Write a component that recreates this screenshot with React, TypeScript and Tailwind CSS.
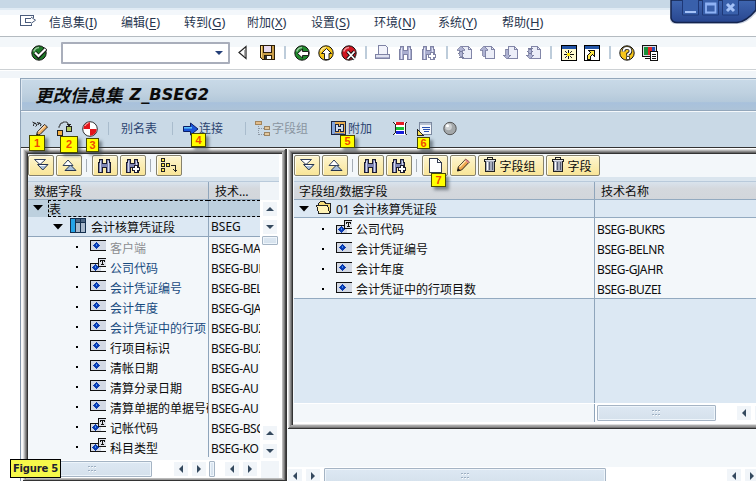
import React from "react";

type Kids = { children?: React.ReactNode };

const Svg = ({ w = 16, h = 16, c = "", crisp = true, children }: Kids & { w?: number; h?: number; c?: string; crisp?: boolean }) => (
  <svg width={w} height={h} viewBox={`0 0 ${w} ${h}`} className={"block flex-none " + c} shapeRendering={crisp ? "crispEdges" : "auto"}>
    {children}
  </svg>
);

const Sep = ({ c }: { c: string }) => <div className={"flex-none " + c} />;

/* ---------- icons ---------- */
const Ball = ({ fill, c, children }: Kids & { fill: string; c: string }) => (
  <Svg c={c} crisp={false}>
    <circle cx="8" cy="8" r="7.2" fill={fill} stroke="#111" strokeWidth="1" />
    <path d="M2.8 6.5Q4 2.8 8 2.5" stroke="#fff" strokeOpacity=".55" strokeWidth="1.6" fill="none" />
    {children}
  </Svg>
);

const Binoculars = ({ c = "", pale = false, plus = false }: { c?: string; pale?: boolean; plus?: boolean }) => {
  const s = pale ? "#7f83a5" : "#1b1b2e";
  const f = pale ? "#a9adcf" : "#7f86b4";
  const hi = pale ? "#e2e4f4" : "#d5d9ee";
  return (
    <Svg c={c}>
      <path d="M2.500 1.500h3v4h4v-4h3v3h1v10h-4v-5h-4v5h-4v-10h1z" fill={f} stroke={s} />
      <path d="M3 3h1v11h-1zM11 3h1v11h-1z" fill={hi} />
      {plus && <path d="M10.5 7.5h2v2h2v3h-2v2h-3v-2h-2v-3h2v-2z" fill="#fff" stroke={s} />}
    </Svg>
  );
};

const PageNav = ({ c, up, double }: { c: string; up: boolean; double?: boolean }) => (
  <Svg c={c}>
    <path d="M5.500 1.500h6l3 3v8.500h-9z" fill="#eceef8" stroke="#8286a8" />
    <path d="M11.500 1.500v3h3" fill="none" stroke="#8286a8" />
    {up ? (
      <path d="M4 1l4 4h-2.500v6h-3v-6H0z" fill="#aeb2d2" stroke="#777b9d" strokeWidth=".8" />
    ) : (
      <path d="M4 14l4-4h-2.500V4h-3v6H0z" fill="#aeb2d2" stroke="#777b9d" strokeWidth=".8" />
    )}
    {double && <path d={up ? "M1 9l3-3 3 3M2 12h5" : "M1 6l3 3 3-3M2 3h5"} stroke="#777b9d" fill="none" />}
  </Svg>
);

const DoubleDown = () => (
  <Svg crisp={false} c="-mt-px">
    <path d="M1.500 2.500h11l-5.500 5z" fill="#fff" stroke="#33415c" />
    <path d="M4.500 7.500h10.500l-5.200 5.500z" fill="#a9c0dc" stroke="#26344e" />
    <path d="M6.500 8.500h6" stroke="#fff" />
  </Svg>
);
const DoubleUp = () => (
  <Svg crisp={false} c="-mt-px">
    <path d="M2 8.500h10l-5-5.500z" fill="#fff" stroke="#33415c" />
    <path d="M4 13.500h11l-5.500-5.500z" fill="#a9c0dc" stroke="#26344e" />
  </Svg>
);

const Trash = () => (
  <Svg w={12} h={15} c="-mt-[2px]">
    <path d="M.5 2.500h11v2h-1v9.500h-9v-9.500h-1z" fill="#a9aebd" stroke="#222" />
    <path d="M3.500 2v-1.500h5v1.500" fill="none" stroke="#222" />
    <path d="M1 3h10v1h-10z" fill="#dfe2ea" />
    <path d="M3 5h1v8h-1z" fill="#fff" />
    <path d="M5 5h1v8h-1zM8 5h1v8h-1z" fill="#555b70" />
  </Svg>
);

const Pencil = () => (
  <Svg crisp={false} c="-mt-px">
    <path d="M2.500 14l.8-4 7.500-8 3.500 3-7.700 8z" fill="#f0a850" stroke="#2b2118" />
    <path d="M4.500 10l7-7.200" stroke="#ffe7b0" strokeWidth="1.300" />
    <path d="M10 3.200l3.200 3 1.200-1.200-3.400-3z" fill="#e0808a" />
    <path d="M2.300 14.200l.8-3 2.300 2z" fill="#111" />
  </Svg>
);

const FieldIcon = ({ t, c = "" }: { t?: boolean; c?: string }) => (
  <Svg w={16} h={15} c={c}>
    <rect x="0" y={t ? 5 : 2} width={t ? 11 : 16} height={t ? 9 : 11} fill="#d3d9e4" />
    <path d={t ? "M8 5.500H.5V13.500H16" : "M16 2.500H.5V12.500H16"} fill="none" stroke="#111" />
    <path d={t ? "M5.500 6l3.500 3.500-3.500 3.500-3.500-3.500z" : "M6.500 4l3.500 3.500-3.500 3.500-3.500-3.500z"} fill="#0b3bb0" />
    <rect x={t ? 5 : 6} y={t ? 8 : 6} width="1" height="2" fill="#3d8ff0" />
    {t && (
      <>
        <path d="M16 .5H8.500V8.500H16" fill="#dfe3ea" stroke="#111" />
        <path d="M10 2h5v2h-1v-1h-1v3h1v1h-3v-1h1v-3h-1v1h-1z" fill="#111" />
      </>
    )}
  </Svg>
);

const Tri = ({ dir, c = "", fill = "#34495e" }: { dir: "l" | "r" | "u" | "d"; c?: string; fill?: string }) => (
  <Svg w={10} h={10} c={c} crisp={false}>
    <path d={{ l: "M7 1v8L3 5z", r: "M3 1v8l4-4z", u: "M1 7h8L5 3z", d: "M1 3h8L5 7z" }[dir]} fill={fill} />
  </Svg>
);

const Expand = ({ c }: { c: string }) => (
  <Svg w={10} h={6} c={c} crisp={false}>
    <path d="M0 0h10L5 5.500z" fill="#000" />
  </Svg>
);

const Arrow = ({ dir, c = "" }: { dir: "l" | "r" | "u" | "d"; c?: string }) => (
  <div className={"flex h-[14px] w-[14px] flex-none items-center justify-center bg-[#f1f5f9] " + c}>
    <Tri dir={dir} />
  </div>
);

const Grip = () => (
  <Svg w={9} h={6}>
    <path d="M0 0h2v1h-2zM3 0h2v1h-2zM6 0h2v1h-2zM0 4h2v1h-2zM3 4h2v1h-2zM6 4h2v1h-2z" fill="#9fb0c2" />
    <path d="M1 1h1v1h-1zM4 1h1v1h-1zM7 1h1v1h-1zM1 5h1v1h-1zM4 5h1v1h-1zM7 5h1v1h-1z" fill="#fff" />
  </Svg>
);

const Thumb = ({ c, children }: Kids & { c: string }) => (
  <div className={"flex flex-none items-center justify-center rounded-[1px] border border-[#a5b4c4] bg-gradient-to-b from-[#dde8f3] to-[#d5e1ec] shadow-[inset_0_0_0_1px_#eef5fb] " + c}>
    {children}
  </div>
);

const Btn = ({ c = "w-[26px]", children }: Kids & { c?: string }) => (
  <div className={"flex h-[21px] flex-none items-center justify-center rounded-[2px] border border-[#85816c] bg-gradient-to-b from-[#fdf5cf] to-[#f9e597] shadow-[inset_1px_1px_#fffbe6] " + c}>
    {children}
  </div>
);

const CommonButtons = () => (
  <>
    <Btn><DoubleDown /></Btn>
    <Btn c="ml-[2px] w-[26px]"><DoubleUp /></Btn>
    <Sep c="h-[13px] w-px ml-[4px] mr-[5px] bg-[#a5adb5]" />
    <Btn><Binoculars /></Btn>
    <Btn c="ml-[2px] w-[26px]"><Binoculars plus /></Btn>
    <Sep c="h-[13px] w-px ml-[4px] mr-[5px] bg-[#a5adb5]" />
  </>
);

/* ---------- application bars ---------- */
const menus = [
  ["信息集", "I", "w-[72px]"],
  ["编辑", "E", "w-[63px]"],
  ["转到", "G", "w-[63px]"],
  ["附加", "X", "w-[64px]"],
  ["设置", "S", "w-[63px]"],
  ["环境", "N", "w-[64px]"],
  ["系统", "Y", "w-[64px]"],
  ["帮助", "H", "w-[63px]"],
];

const MenuBar = () => (
  <div className="flex h-[27px] flex-none items-center border-b border-[#b4bbc1] bg-[linear-gradient(#f3f7fb_5px,#fff_5px)] pb-[2px] text-[12px] text-[#27364f]">
    <Svg c="ml-[20px] mr-[13px] -mt-px">
      <path d="M13.500 3.500V1.500H.5V11.500H11.500V10" fill="none" stroke="#4a5c7c" />
      <path d="M11 4.500H5.500V8.500H11" fill="none" stroke="#4a5c7c" />
      <path d="M11 3l4.500 3.200L11 9.500" fill="none" stroke="#4a5c7c" shapeRendering="auto" />
    </Svg>
    {menus.map(([t, k, w]) => (
      <div key={k} className={"flex-none whitespace-nowrap leading-[18px] " + w}>
        {t}
        <span className="text-[13px]">(<span className="underline underline-offset-2">{k}</span>)</span>
      </div>
    ))}
  </div>
);

const barSep = "h-[13px] w-[2px] bg-[#bdccda] ";

const StandardBar = () => (
  <div className="flex h-[33px] flex-none items-center border-b border-[#cdd1d4] bg-[linear-gradient(#f3f7fa_10px,#fff_10px)] pb-px">
    <Ball fill="#1f7a28" c="ml-[31px]">
      <path d="M4 7.500l3.500 4L15 3.500" fill="none" stroke="#111" strokeWidth="4" />
      <path d="M4 7.500l3.500 3.500L14.500 4" fill="none" stroke="#fff" strokeWidth="2.200" />
    </Ball>
    <div className="ml-[14px] flex h-[22px] w-[169px] flex-none items-center justify-end rounded-[1px] border-2 border-[#a9aebb] bg-white pr-[4px]">
      <Tri dir="d" fill="#243f78" />
    </div>
    <Svg w={9} h={15} c="ml-[8px]" crisp={false}>
      <path d="M8 1.500v12L1 7.500z" fill="#fff" stroke="#222" strokeWidth="1.200" />
      <path d="M6.500 5v6" stroke="#aaa" />
    </Svg>
    <Svg c="ml-[13px]">
      <path d="M.5 .5h14v14h-12l-2-2z" fill="#c99e4a" stroke="#2a1d0a" />
      <path d="M3.500 .5h8v7h-8z" fill="#eadcf0" stroke="#2a1d0a" />
      <path d="M4.500 10.500h7v4h-7z" fill="#fff" stroke="#2a1d0a" />
      <path d="M5 11h2v3h-2z" fill="#333" />
      <path d="M1 1h1v11h-1z" fill="#ffdc84" />
    </Svg>
    <Sep c={barSep + "ml-[8px] mr-[8px]"} />
    <Ball fill="#1f8a2c" c="">
      <path d="M3.500 8.500l5-4.500v2.500h6v4h-6v2.500z" fill="#fff" stroke="#111" strokeWidth=".9" />
    </Ball>
    <Ball fill="#f5c518" c="ml-[8px]">
      <path d="M8.500 3.500l5 5h-2.500v6h-4.500v-6h-3z" fill="#fff" stroke="#111" strokeWidth=".9" />
    </Ball>
    <Ball fill="#d01620" c="ml-[7px]">
      <path d="M6.500 6.500l7 7.500M13.500 6.500l-7 7.500" stroke="#111" strokeWidth="3.600" />
      <path d="M6.500 6.500l7 7.500M13.500 6.500l-7 7.500" stroke="#fff" strokeWidth="1.800" />
    </Ball>
    <Sep c={barSep + "ml-[8px] mr-[8px]"} />
    <Svg>
      <path d="M3.500 .5h7l2 2v6.500h-9z" fill="#f2f3fb" stroke="#7f83a5" />
      <path d="M.5 9.500h14v4h-14z" fill="#dfe1f0" stroke="#7f83a5" />
      <path d="M1 12h13v1h-13z" fill="#a9accb" />
    </Svg>
    <Binoculars pale c="ml-[7px]" />
    <Binoculars pale plus c="ml-[7px]" />
    <Sep c={barSep + "ml-[9px] mr-[9px]"} />
    <PageNav up double c="" />
    <PageNav up c="ml-[7px]" />
    <PageNav up={false} c="ml-[7px]" />
    <PageNav up={false} double c="ml-[7px]" />
    <Sep c={barSep + "ml-[8px] mr-[9px]"} />
    <Svg>
      <path d="M.5 .5h15v15h-15z" fill="#fffbd0" stroke="#000" />
      <path d="M1 1h14v3h-14z" fill="#2355a8" />
      <path d="M7.500 5v9M3 9.500h10" stroke="#111" />
      <path d="M4 6l7 7M11 6l-7 7" stroke="#111" strokeWidth=".9" shapeRendering="auto" />
      <path d="M6 8h3v3h-3z" fill="#ffe600" />
    </Svg>
    <Svg c="ml-[7px]">
      <path d="M.5 .5h15v15h-15z" fill="#fff" stroke="#000" />
      <path d="M1 1h14v3h-14z" fill="#2355a8" />
      <path d="M3.500 14.500v-4l3-3-2-2h6v6l-2-2-2 2v3z" fill="#ffe94a" stroke="#111" />
    </Svg>
    <Sep c={barSep + "ml-[9px] mr-[8px]"} />
    <Ball fill="#f6c61a" c="">
      <path d="M4.500 6.500q0-3.500 3.500-3.500t3.500 3q0 2-2.500 3.200v1.500" fill="none" stroke="#222" strokeWidth="3.600" />
      <path d="M4.500 6.500q0-3.500 3.500-3.500t3.500 3q0 2-2.500 3.200v1.500" fill="none" stroke="#fff" strokeWidth="1.800" />
      <path d="M7.500 11.500h3v3h-3z" fill="#fff" stroke="#222" strokeWidth=".8" />
    </Ball>
    <Svg c="ml-[7px]">
      <path d="M.5 .5h14v11h-14zM2.500 13.500h8" fill="#d8dae2" stroke="#111" />
      <path d="M2 2h4v8h-4z" fill="#18913a" />
      <path d="M6 2h4v8h-4z" fill="#e02626" />
      <path d="M10 2h3v8h-3z" fill="#2450b8" />
      <path d="M8.500 6.500h7v9h-7z" fill="#fff" stroke="#111" />
      <path d="M10 9h4v1h-4zM10 11h4v1h-4zM10 13h4v1h-4z" fill="#111" />
    </Svg>
  </div>
);

const TitleBar = () => (
  <div className="flex h-[33px] flex-none items-center border-y border-[#93a7bb] bg-[linear-gradient(#c9dae8,#bfd1e0_45%,#b3c8da_75%,#a8c1dc_76%,#adc3d8)] pl-[14px] font-bold italic text-[#0b0b0b] shadow-[inset_1px_1px_#dfe9f2]">
    <span className="whitespace-nowrap text-[17.500px] leading-[24px]">更改信息集</span>
    <span className="ml-[7px] whitespace-nowrap font-['DejaVu_Sans',sans-serif] text-[16.200px] leading-[24px]">Z_BSEG2</span>
  </div>
);

const appSep = "h-[13px] w-px bg-[#a9bccd] ";

const AppBar = () => (
  <div className="flex h-[36px] flex-none items-center border-t border-[#f4f8fb] bg-[#c9d9e6] pb-[2px] text-[12px] text-[#2c4470]">
    <Svg c="ml-[11px]" crisp={false}>
      <path d="M1.500 5q0-4 2.500-2.500t-.5 3M6 4q1-3.500 2.500-1.500t-.5 2.500M.5 1l3.500 2M5 1.500l3 1" fill="none" stroke="#222" />
      <path d="M4.500 14.500l.8-3.500 7.200-7.500 3 2.500-7.500 7.500z" fill="#f2b060" stroke="#2b2118" />
      <path d="M6.500 11l6.500-6.500" stroke="#fff" />
      <path d="M4.200 15l1-2.500 1.300 1.500z" fill="#111" />
    </Svg>
    <Svg c="ml-[9px]">
      <path d="M.5 9.500h5v5h-5z" fill="#f4b042" stroke="#222" />
      <path d="M9.500 5.500h5v5h-5z" fill="#b5cc62" stroke="#222" />
      <path d="M2 7v-2h1v-2h1v-1h2v-1h4v1h1v2h1" stroke="#222" strokeWidth=".8" fill="none" shapeRendering="auto" />
      <path d="M10 3h4v1h-1v1h-2v-1h-1z" fill="#222" />
    </Svg>
    <Svg c="ml-[9px]" crisp={false}>
      <circle cx="8" cy="8" r="7.300" fill="#fff" stroke="#333" />
      <path d="M8 8V1.300A6.700 6.700 0 0 0 1.300 8zM8 8v6.700A6.700 6.700 0 0 0 14.700 8z" fill="#e3151b" />
      <path d="M3 5q1-2.500 3.500-3" stroke="#ffaaaa" fill="none" />
    </Svg>
    <Sep c={appSep + "ml-[10px] mr-[12px]"} />
    <span className="w-[51px] flex-none whitespace-nowrap">别名表</span>
    <Sep c={appSep + "mr-[10px]"} />
    <Svg c="" crisp={false}>
      <path d="M.5 5.500h7V2l7.500 6-7.500 6V10.500h-7z" fill="#1b55d8" stroke="#0a1d66" />
      <path d="M1 6.800h8" stroke="#67d0ff" strokeWidth="1.400" />
    </Svg>
    <span className="w-[46px] flex-none whitespace-nowrap">连接</span>
    <Sep c={appSep + "mr-[9px]"} />
    <Svg c="mr-[1px]">
      <path d="M.5 .5h6v3h-6z" fill="#e2bc8a" stroke="#a3855c" />
      <path d="M9.500 5.500h5v3h-5zM9.500 11.500h5v3h-5z" fill="#e2c79c" stroke="#9a8363" />
      <path d="M3.500 5v9M4 7.500h5M4 13.500h5" stroke="#8d97a3" strokeDasharray="1 1" />
    </Svg>
    <span className="w-[59px] flex-none whitespace-nowrap text-[#8a95a1]">字段组</span>
    <Svg c="mr-px">
      <path d="M.5 .5h14v13h-14z" fill="#e8ad50" stroke="#1c2540" />
      <path d="M1 1h3v12h-3z" fill="#85a6dc" />
      <path d="M4.500 3.500h3v2h2v-2h3v7h-3v-2h-2v2h-3z" fill="#cfdcf0" stroke="#1c2540" />
      <path d="M3 12h10v1h-10z" fill="#6e84b0" />
    </Svg>
    <span className="w-[44px] flex-none whitespace-nowrap">附加</span>
    <Svg>
      <path d="M3 1h10v13h-10z" fill="#fff" />
      <path d="M4 1h8v3h-8z" fill="#e51c23" />
      <path d="M4 6h8v3h-8z" fill="#19c22f" />
      <path d="M4 10h8v3h-8z" fill="#1720d8" />
      <path d="M1 1l2 2v9l-2 2M15 1l-2 2v9l2 2" stroke="#222" fill="none" />
    </Svg>
    <Svg c="ml-[9px]">
      <path d="M2.500 1.500h12v12h-12z" fill="#f6f8fc" stroke="#7c89a0" />
      <path d="M3 2h11v2h-11z" fill="#b9c3d3" />
      <path d="M5 6h8v1h-8zM6 8h7v1h-7zM7 10h5v1h-5z" fill="#2a51b0" />
      <path d="M.5 8.500v6h6z" fill="#f7df56" stroke="#222" />
    </Svg>
    <Svg c="ml-[9px]" crisp={false}>
      <circle cx="8" cy="7.500" r="6.200" fill="#a4a8aa" stroke="#555" />
      <circle cx="6.500" cy="5.800" r="3.400" fill="#cdd0d2" />
      <circle cx="5.500" cy="4.800" r="1.500" fill="#fff" />
    </Svg>
  </div>
);

/* ---------- left tree ---------- */
type Row = { name: string; code: string; t?: boolean; tone?: string };
const blue = "text-[#174a7e]";
const leftRows: Row[] = [
  { name: "客户端", code: "BSEG-MA", tone: "text-[#8b8d90]" },
  { name: "公司代码", code: "BSEG-BUK", t: true, tone: blue },
  { name: "会计凭证编号", code: "BSEG-BEL", tone: blue },
  { name: "会计年度", code: "BSEG-GJA", tone: blue },
  { name: "会计凭证中的行项", code: "BSEG-BUZ", tone: blue },
  { name: "行项目标识", code: "BSEG-BUZ" },
  { name: "清帐日期", code: "BSEG-AU" },
  { name: "清算分录日期", code: "BSEG-AU" },
  { name: "清算单据的单据号码", code: "BSEG-AU" },
  { name: "记帐代码", code: "BSEG-BSC", t: true },
  { name: "科目类型", code: "BSEG-KO", t: true },
];

const LeftPanel = () => (
  <div className="flex w-[267px] flex-none flex-col overflow-hidden border-l border-[#8496aa] bg-white pb-[3px] pl-[7px] pr-[8px] pt-[7px] shadow-[inset_0_1px_#333,inset_2px_2px_#f8f8f8,inset_-1px_-1px_#333,inset_-2px_-1px_#444,inset_3px_3px_#dcdcdc,inset_-3px_-1px_#777,inset_4px_4px_#b4b4b4,inset_-4px_-2px_#999,inset_5px_5px_#8c8c8c,inset_-5px_-3px_#bbb,inset_6px_6px_#666,inset_7px_7px_#333]">
    <div className="flex h-[306px] w-[251px] flex-none flex-col bg-[#f3f7fa]">
      <div className="flex h-[27px] flex-none items-start border-b-4 border-[#dae5ee] pt-px">
        <div className="flex items-center">
          <CommonButtons />
          <Btn>
            <Svg>
              <path d="M.5 .5h3v3h-3zM.5 5.500h3v3h-3zM.5 10.500h3v3h-3zM5.500 5.500h3v3h-3z" fill="#ffe64a" stroke="#222" />
              <path d="M10 7.500h4.500v6M12.500 11.500l2 2 2-2" fill="none" stroke="#222" />
            </Svg>
          </Btn>
        </div>
      </div>
      <div className="flex h-[279px] flex-none">
        <div className="flex h-[279px] w-[232px] flex-none flex-col overflow-hidden text-[12px] leading-[18px] text-[#0c0c0c]">
          <div className="flex h-[19px] flex-none border-b border-t border-b-[#93aac0] border-t-[#b9cadb] bg-[linear-gradient(#d9e3ed,#d4d8dd_40%,#d2d6db)]">
            <div className="w-[181px] flex-none border-r border-[#8fa5bb] pl-[6px] pt-px">数据字段</div>
            <div className="pl-[6px] pt-px">技术…</div>
          </div>
          <div className="flex h-[17px] flex-none bg-[#bdd0de]">
            <Expand c="ml-[5px] mr-[5px] mt-[5px]" />
            <div className="w-[160px] flex-none whitespace-nowrap border-y border-l border-dashed border-black leading-[17px]">表</div>
            <div className="flex-1 border-y border-dashed border-black shadow-[inset_1px_0_#8fa5bb]" />
          </div>
          <div className="flex h-[20px] flex-none border-b border-[#8fa5bb] bg-[#dce8f3]">
            <div className="flex w-[181px] flex-none border-r border-[#8fa5bb]">
              <Expand c="ml-[25px] mr-[7px] mt-[7px]" />
              <Svg c="mr-[5px] mt-px">
                <path d="M.5 .5h15v14h-15z" fill="#a8b9cc" stroke="#15304e" />
                <path d="M1 1h4v13h-4z" fill="#25a4e8" />
                <path d="M6 1h9v3h-9z" fill="#4a6583" />
                <path d="M5 1h1v13h-1zM10 1h1v13h-1zM6 4h9v1h-9z" fill="#15304e" />
              </Svg>
              <span className="whitespace-nowrap leading-[21px]">会计核算凭证段</span>
            </div>
            <span className="pl-[2px] leading-[20px]">BSEG</span>
          </div>
          {leftRows.map((r) => (
            <div key={r.name} className="flex h-[20px] flex-none">
              <div className="flex w-[181px] flex-none overflow-hidden border-r border-[#8fa5bb]">
                <div className="ml-[48px] mr-[12px] mt-[9px] h-[2px] w-[2px] flex-none bg-black" />
                <FieldIcon t={r.t} c="mr-[4px] mt-px" />
                <span className={"whitespace-nowrap leading-[23px] " + (r.tone ?? "")}>{r.name}</span>
              </div>
              <span className="whitespace-nowrap pl-[2px] leading-[23px] tracking-[-0.400px]">{r.code}</span>
            </div>
          ))}
        </div>
        <div className="flex h-[279px] w-[19px] flex-none flex-col items-center bg-white">
          <div className="h-[19px] w-full flex-none border-t border-[#b9cadb] bg-[#f0f4f8]" />
          <Arrow dir="u" c="mt-[2px]" />
          <Arrow dir="d" c="mt-[4px]" />
          <Thumb c="mt-[2px] h-[9px] w-[16px]" />
          <Arrow dir="u" c="mt-auto" />
          <Arrow dir="d" c="mb-[2px] mt-[4px]" />
        </div>
      </div>
    </div>
    <div className="flex h-[18px] w-[251px] flex-none items-center bg-white">
      <Thumb c="h-[16px] w-[124px]"><div className="ml-[4px]"><Grip /></div></Thumb>
      <Arrow dir="l" c="ml-[22px]" />
      <Arrow dir="r" c="ml-[4px]" />
      <Thumb c="ml-[3px] h-[16px] w-[6px]" />
      <Arrow dir="l" c="ml-[10px]" />
      <Arrow dir="r" c="ml-[4px]" />
      <div className="ml-auto h-[17px] w-[18px] bg-[#f1f5f9]" />
    </div>
  </div>
);

/* ---------- right tree ---------- */
const rightRows: Row[] = [
  { name: "公司代码", code: "BSEG-BUKRS", t: true },
  { name: "会计凭证编号", code: "BSEG-BELNR" },
  { name: "会计年度", code: "BSEG-GJAHR" },
  { name: "会计凭证中的行项目数", code: "BSEG-BUZEI" },
];

const RightPanel = () => (
  <div className="flex h-[282px] w-[475px] flex-none flex-col overflow-hidden bg-[#f3f7fa] pb-[7px] pl-[7px] pt-[7px] text-[12px] leading-[18px] text-[#0c0c0c] shadow-[inset_0_1px_#333,inset_1px_2px_#fff,inset_0_-1px_#333,inset_2px_3px_#dcdcdc,inset_0_-2px_#777,inset_3px_4px_#b4b4b4,inset_0_-3px_#999,inset_4px_5px_#8c8c8c,inset_0_-4px_#aaa,inset_5px_6px_#666,inset_6px_7px_#333,inset_0_-5px_#ddd,inset_0_-7px_#fff]">
    <div className="flex h-[27px] flex-none items-start border-b-4 border-[#dae5ee] bg-[#f3f7fa] pt-px">
      <div className="flex items-center">
        <CommonButtons />
        <Btn>
          <Svg w={13} h={15}>
            <path d="M.5 .5h8l4 4v9.500h-12z" fill="#fff" stroke="#333c50" />
            <path d="M8.500 .5v4h4" fill="none" stroke="#333c50" />
          </Svg>
        </Btn>
        <Btn c="ml-[2px] w-[26px]"><Pencil /></Btn>
        <Btn c="ml-[2px] w-[66px] pr-[2px]"><Trash /><span className="ml-[3px] whitespace-nowrap pt-[2px]">字段组</span></Btn>
        <Btn c="ml-[2px] w-[54px] pr-[2px]"><Trash /><span className="ml-[3px] whitespace-nowrap pt-[2px]">字段</span></Btn>
      </div>
    </div>
    <div className="flex h-[19px] flex-none border-b border-t border-b-[#93aac0] border-t-[#b9cadb] bg-[linear-gradient(#d9e3ed,#d4d8dd_40%,#d2d6db)]">
      <div className="w-[301px] flex-none border-r border-[#8fa5bb] pl-[5px] pt-px">字段组/数据字段</div>
      <div className="pl-[6px] pt-px">技术名称</div>
    </div>
    <div className="flex h-[18px] flex-none border-b border-[#93aac0] bg-[#dce8f3]">
      <div className="flex w-[301px] flex-none border-r border-[#8fa5bb]">
        <Expand c="ml-[5px] mr-[7px] mt-[6px]" />
        <Svg c="mr-[4px]" h={15}>
          <path d="M2.500 3.500l2-2h4l1 2h5v8.500h-12z" fill="#f6dc7a" stroke="#222" />
          <path d="M.5 5.500h11l2 7.500h-11z" fill="#fff3b6" stroke="#222" />
        </Svg>
        <span className="whitespace-nowrap leading-[20px]">01 会计核算凭证段</span>
      </div>
    </div>
    <div className="flex h-[81px] flex-none flex-col border-b border-[#93aac0]">
      {rightRows.map((r) => (
        <div key={r.name} className="flex h-[20px] flex-none">
          <div className="flex w-[301px] flex-none border-r border-[#8fa5bb]">
            <div className="ml-[28px] mr-[12px] mt-[10px] h-[2px] w-[2px] flex-none bg-black" />
            <FieldIcon t={r.t} c="mr-[4px] mt-[2px]" />
            <span className="whitespace-nowrap leading-[23px]">{r.name}</span>
          </div>
          <span className="pl-[2px] leading-[23px] tracking-[-0.400px]">{r.code}</span>
        </div>
      ))}
    </div>
    <div className="flex h-[104px] flex-none bg-[#dce8f3]"><div className="w-[301px] border-r border-[#8fa5bb]" /></div>
    <div className="flex h-[19px] flex-none border-t border-white">
      <div className="w-[301px] flex-none border-r border-[#8fa5bb]" />
      <div className="flex flex-1 items-center bg-white">
        <Thumb c="ml-[2px] h-[16px] w-[119px]"><Grip /></Thumb>
        <Arrow dir="l" c="ml-[21px]" />
        <Arrow dir="r" c="ml-[4px]" />
      </div>
    </div>
  </div>
);

const Badge = ({ c, children }: Kids & { c: string }) => (
  <div className={"absolute flex items-center justify-center border border-[#4a4a00] bg-[#ffff00] font-['Liberation_Sans',sans-serif] text-[11px] font-bold leading-none text-[#f04a00] shadow-[3px_3px_3px_rgba(50,60,70,0.55)] " + c}>
    {children}
  </div>
);

const WindowControls = () => (
  <Svg w={86} h={27} c="absolute right-0 top-0" crisp={false}>
    <defs>
      <linearGradient id="wc" x1="0" y1="0" x2="0" y2="1">
        <stop offset="0" stopColor="#3f66b0" />
        <stop offset="1" stopColor="#28468f" />
      </linearGradient>
    </defs>
    <path d="M0 0V20Q1 24 6 24H68Q77 24 86 13V0z" fill="#c8d0df" />
    <path d="M1 0V18Q2 22.500 7 22.500H67Q76 22 86 10V0z" fill="url(#wc)" stroke="#14244e" strokeWidth="1.500" />
    <path d="M12.500-1h16v16h-16zM32.500-1h16v16h-16zM52.500-1h16v16h-16z" fill="#3960ab" stroke="#1e3878" />
    <path d="M15 11h11v2h-11z" fill="#a5c2f7" />
    <path d="M36 3.500h9.500v9h-9.500zM36 4.500h9.500" fill="none" stroke="#8fb2f4" strokeWidth="1.800" />
    <path d="M57 4l7 7M64 4l-7 7" stroke="#a5c2f7" strokeWidth="3" />
  </Svg>
);

export default function App() {
  return (
    <div className="relative flex h-[481px] w-[756px] flex-col overflow-hidden bg-white font-['Noto_Sans','Noto_Sans_CJK_SC',sans-serif]">
      <div className="h-[10px] flex-none bg-[linear-gradient(#c7d8e6_8px,#e0ebf4_8px)]" />
      <MenuBar />
      <StandardBar />
      <div className="h-[8px] flex-none bg-[linear-gradient(#fff_1px,#f1f5f9_1px)]" />
      <div className="flex h-[403px] flex-none flex-col pl-[20px]">
        <div className="flex flex-none flex-col border-l border-[#8fa3b8]">
          <TitleBar />
          <AppBar />
        </div>
        <div className="flex h-[334px] flex-none">
          <LeftPanel />
          <div className="flex w-[469px] flex-none flex-col">
            <RightPanel />
            <div className="h-[38px] flex-none bg-[#f3f7fa]" />
            <div className="flex h-[18px] flex-none items-center bg-white">
              <Arrow dir="l" c="ml-px" />
              <Arrow dir="r" c="ml-[4px]" />
              <Thumb c="ml-[4px] h-[16px] w-[282px]"><Grip /></Thumb>
              <Arrow dir="l" c="ml-[121px]" />
              <Arrow dir="r" c="ml-[4px]" />
            </div>
          </div>
        </div>
      </div>
      <WindowControls />
      <Badge c="left-[29px] top-[135px] h-[16px] w-[16px]">1</Badge>
      <Badge c="left-[60px] top-[136px] h-[17px] w-[18px]">2</Badge>
      <Badge c="left-[86px] top-[138px] h-[14px] w-[13px]">3</Badge>
      <Badge c="left-[191px] top-[133px] h-[14px] w-[15px]">4</Badge>
      <Badge c="left-[340px] top-[135px] h-[13px] w-[15px]">5</Badge>
      <Badge c="left-[417px] top-[137px] h-[12px] w-[13px]">6</Badge>
      <Badge c="left-[431px] top-[173px] h-[14px] w-[15px]">7</Badge>
      <div className="absolute left-[10px] top-[459px] flex h-[19px] w-[51px] items-center justify-center whitespace-nowrap border border-black bg-[#f6f84a] font-['DejaVu_Sans',sans-serif] text-[10px] font-bold tracking-[-0.200px] text-[#1d2030]">
        Figure 5
      </div>
    </div>
  );
}
